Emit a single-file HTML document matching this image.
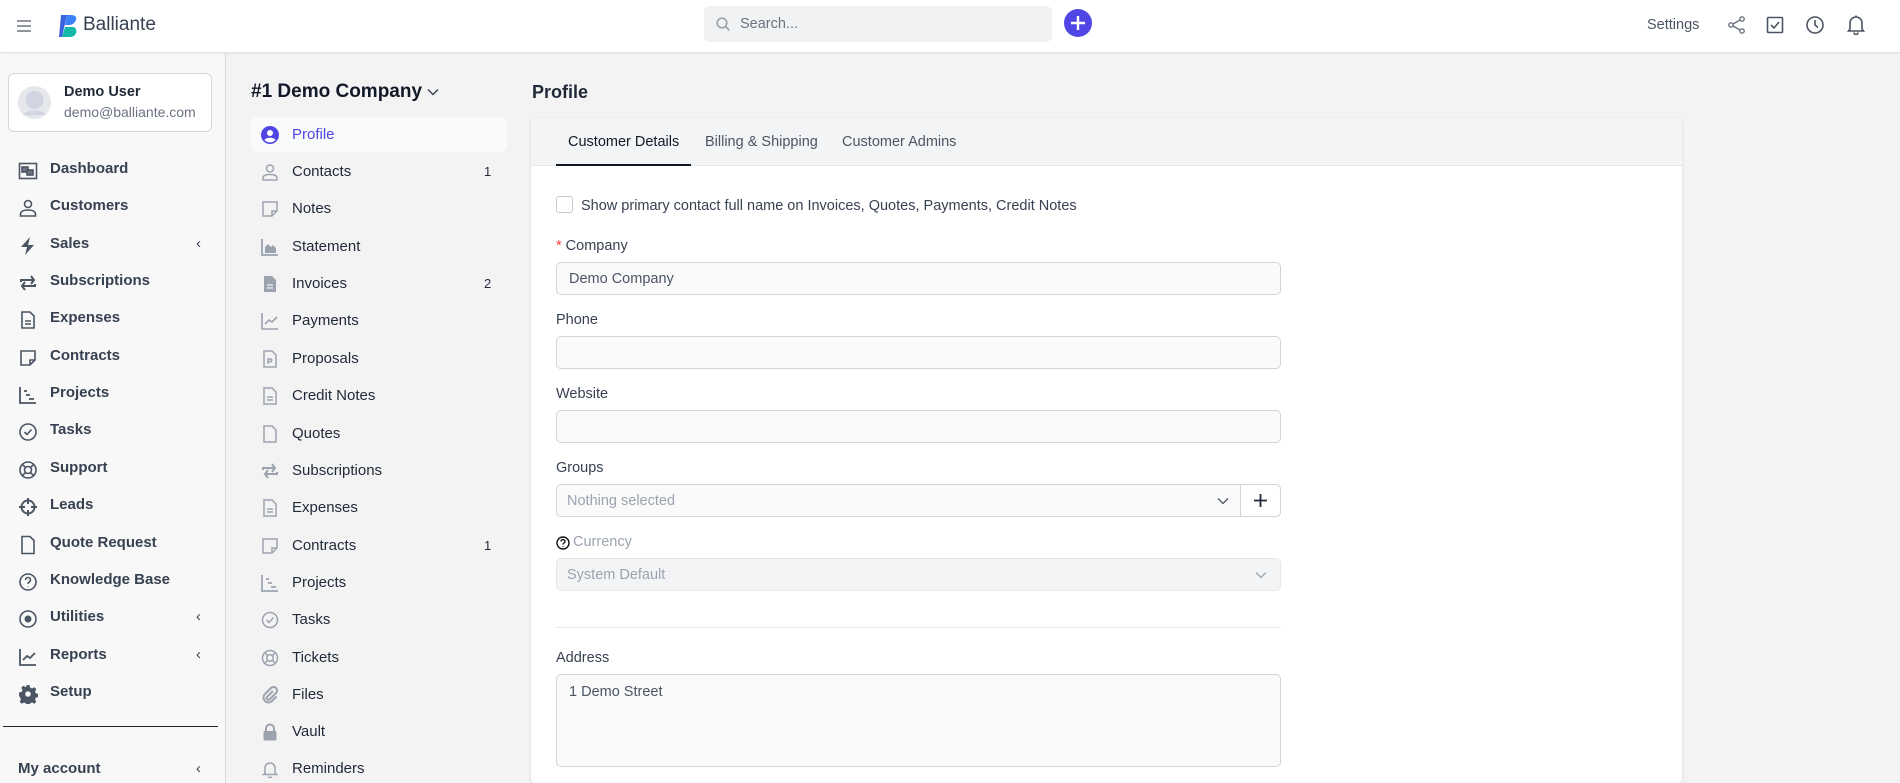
<!DOCTYPE html>
<html><head><meta charset="utf-8">
<style>
*{box-sizing:border-box;margin:0;padding:0}
html{width:1900px;height:783px;overflow:hidden}
body{width:1900px;height:783px;overflow:hidden;font-family:"Liberation Sans",sans-serif;background:#f3f3f4;color:#1f2937;position:relative}
.top{position:absolute;left:0;top:0;width:1900px;height:53px;background:#fff;border-bottom:1px solid #e2e2e2;box-shadow:0 1px 2px rgba(0,0,0,.05);z-index:2}
.abs{position:absolute}
.side{position:absolute;left:0;top:53px;width:226px;height:730px;background:#f8f8f8;border-right:1px solid #dcdcdc}
.card{position:absolute;left:8px;top:20px;width:204px;height:59px;border:1px solid #d6d6d6;border-radius:6px;background:#fff}
.mi{position:absolute;left:0;width:226px;height:30px;font-size:15px;font-weight:bold;color:#374151}
.mi svg{position:absolute;left:18px;top:5px}
.mi span{position:absolute;left:50px;top:4px}
.mi .ch{left:196px;font-weight:normal;color:#374151}
.col{position:absolute;left:226px;top:53px;width:290px;height:730px}
.si{position:absolute;left:25px;width:256px;height:35px;font-size:15px;color:#1f2937;border-radius:6px}
.si svg{position:absolute;left:10px;top:9px}
.si span{position:absolute;left:41px;top:9px}
.si .n{left:233px;font-size:13px;top:10px}
.panel{position:absolute;left:531px;top:118px;width:1151px;height:665px;background:#fff;border-radius:4px;box-shadow:0 1px 3px rgba(0,0,0,.12)}
.tabs{position:absolute;left:0;top:0;width:1151px;height:48px;background:#f3f4f6;border-bottom:1px solid #e5e7eb;border-radius:4px 4px 0 0}
.tab{position:absolute;top:16px;font-size:14.5px;color:#4b5563}
.lbl{position:absolute;left:25px;font-size:14.5px;color:#374151}
.inp{position:absolute;left:25px;width:725px;height:33px;border:1px solid #d1d5db;border-radius:5px;background:#fafafa;font-size:14.5px;color:#4b5563;padding:8px 12px}
</style></head><body>
<div class="top">
  <svg class="abs" style="left:16px;top:19px" width="16" height="14" viewBox="0 0 16 14"><path d="M1 2h14M1 7h14M1 12h14" stroke="#6b7280" stroke-width="1.6"/></svg>
  <svg class="abs" style="left:59px;top:14px" width="19" height="24" viewBox="0 0 19 24"><path d="M2 1h6L3 23H0z" fill="#3b63e0"/><path d="M8 1h4c4 0 6 2 5 5s-4 5-7 5L6 11z" fill="#3b82f6"/><path d="M6 13h7c4 0 5 3 4 6s-3 4-7 4H3z" fill="#14b8a6"/></svg>
  <div class="abs" style="left:83px;top:14px;font-size:19px;color:#374151">Balliante</div>
  <div class="abs" style="left:704px;top:6px;width:348px;height:36px;background:#f1f2f4;border-radius:6px">
    <svg class="abs" style="left:12px;top:11px" width="15" height="15" viewBox="0 0 15 15"><circle cx="6" cy="6" r="4.8" fill="none" stroke="#9ca3af" stroke-width="1.6"/><path d="M9.5 9.5l4 4" stroke="#9ca3af" stroke-width="1.6"/></svg>
    <div class="abs" style="left:36px;top:10px;font-size:14.5px;color:#6b7280">Search...</div>
  </div>
  <div class="abs" style="left:1064px;top:9px;width:28px;height:28px;border-radius:50%;background:#4f46e5"><svg width="28" height="28"><path d="M14 7v14M7 14h14" stroke="#fff" stroke-width="2.4"/></svg></div>
  <div class="abs" style="left:1647px;top:17px;font-size:14.5px;color:#4b5563">Settings</div>
  <svg class="abs" style="left:1727px;top:15px" width="20" height="20" viewBox="0 0 20 20" fill="none" stroke="#6b7280" stroke-width="1.4"><circle cx="15" cy="4" r="2.2"/><circle cx="4" cy="10" r="2.2"/><circle cx="15" cy="16" r="2.2"/><path d="M6 9l7-4M6 11l7 4"/></svg>
  <svg class="abs" style="left:1766px;top:16px" width="18" height="18" viewBox="0 0 18 18" fill="none" stroke="#4b5563" stroke-width="1.6"><rect x="1.5" y="1.5" width="15" height="15" rx="1"/><path d="M5 9l3 3 5-6"/></svg>
  <svg class="abs" style="left:1805px;top:15px" width="20" height="20" viewBox="0 0 20 20" fill="none" stroke="#4b5563" stroke-width="1.6"><circle cx="10" cy="10" r="8"/><path d="M10 5v5l3 2.5"/></svg>
  <svg class="abs" style="left:1846px;top:14px" width="20" height="21" viewBox="0 0 20 21" fill="none" stroke="#4b5563" stroke-width="1.6"><path d="M4 15V9a6 6 0 0112 0v6l1.5 2h-15zM8 18.5a2 2 0 004 0M10 1.5v1.5"/></svg>
</div>

<div class="side">
  <div class="card">
    <svg class="abs" style="left:9px;top:12px" width="33" height="33" viewBox="0 0 33 33"><circle cx="16.5" cy="16.5" r="16.5" fill="#e5e7eb"/><circle cx="16.5" cy="14" r="9" fill="#d1d5e2"/><path d="M5 29c3-6 20-6 23 0" fill="#d1d5e2"/></svg>
    <div class="abs" style="left:55px;top:10px;font-size:14.5px;font-weight:bold;color:#1f2937">Demo User</div>
    <div class="abs" style="left:55px;top:30px;font-size:14px;color:#6b7280">demo@balliante.com</div>
  </div>
  <div class="mi" style="top:103px"><svg width="20" height="20" viewBox="0 0 20 20" fill="none" stroke="#4b5563" stroke-width="1.6"><rect x="1.5" y="2.5" width="17" height="15"/><rect x="4" y="6" width="6" height="5" fill="#6b7280"/><rect x="9" y="9" width="6" height="5" fill="#6b7280"/></svg><span>Dashboard</span></div>
  <div class="mi" style="top:140px"><svg width="20" height="20" viewBox="0 0 20 20" fill="none" stroke="#4b5563" stroke-width="1.6"><circle cx="10" cy="6" r="3.5"/><path d="M2.5 18v-2c0-2 2-4 7.5-4s7.5 2 7.5 4v2z"/></svg><span>Customers</span></div>
  <div class="mi" style="top:178px"><svg width="20" height="20" viewBox="0 0 20 20"><path d="M12 1L3 11h6l-2 8 9-10h-6z" fill="#4b5563"/></svg><span>Sales</span><span class="ch">‹</span></div>
  <div class="mi" style="top:215px"><svg width="20" height="20" viewBox="0 0 20 20" fill="none" stroke="#4b5563" stroke-width="2"><path d="M3 9V7h13M13 3l3 4-3 4M17 11v2H4M7 17l-3-4 3-4"/></svg><span>Subscriptions</span></div>
  <div class="mi" style="top:252px"><svg width="20" height="20" viewBox="0 0 20 20" fill="none" stroke="#4b5563" stroke-width="1.6"><path d="M4 2h8l4 4v12H4zM7 11h6M7 14h6"/></svg><span>Expenses</span></div>
  <div class="mi" style="top:290px"><svg width="20" height="20" viewBox="0 0 20 20" fill="none" stroke="#4b5563" stroke-width="1.6"><path d="M3 3h14v9l-5 5H3zM17 12h-5v5"/></svg><span>Contracts</span></div>
  <div class="mi" style="top:327px"><svg width="20" height="20" viewBox="0 0 20 20" fill="none" stroke="#4b5563" stroke-width="1.8"><path d="M2 2v16h16M6 6h3M8 10h4M11 14h5"/></svg><span>Projects</span></div>
  <div class="mi" style="top:364px"><svg width="20" height="20" viewBox="0 0 20 20" fill="none" stroke="#4b5563" stroke-width="1.6"><circle cx="10" cy="10" r="8"/><path d="M6.5 10l2.5 2.5 4.5-5"/></svg><span>Tasks</span></div>
  <div class="mi" style="top:402px"><svg width="20" height="20" viewBox="0 0 20 20" fill="none" stroke="#4b5563" stroke-width="1.6"><circle cx="10" cy="10" r="8"/><circle cx="10" cy="10" r="3.5"/><path d="M4.5 4.5l3 3M15.5 4.5l-3 3M4.5 15.5l3-3M15.5 15.5l-3-3"/></svg><span>Support</span></div>
  <div class="mi" style="top:439px"><svg width="20" height="20" viewBox="0 0 20 20" fill="none" stroke="#4b5563" stroke-width="2"><circle cx="10" cy="10" r="6.5"/><path d="M10 1v6M10 13v6M1 10h6M13 10h6"/></svg><span>Leads</span></div>
  <div class="mi" style="top:477px"><svg width="20" height="20" viewBox="0 0 20 20" fill="none" stroke="#4b5563" stroke-width="1.6"><path d="M4 1.5h8l4 4v13H4z"/></svg><span>Quote Request</span></div>
  <div class="mi" style="top:514px"><svg width="20" height="20" viewBox="0 0 20 20" fill="none" stroke="#4b5563" stroke-width="1.6"><circle cx="10" cy="10" r="8"/><path d="M7.5 8a2.5 2.5 0 115 0c0 2-2.5 2-2.5 4M10 14.5v.5"/></svg><span>Knowledge Base</span></div>
  <div class="mi" style="top:551px"><svg width="20" height="20" viewBox="0 0 20 20"><circle cx="10" cy="10" r="8" fill="none" stroke="#4b5563" stroke-width="1.6"/><circle cx="10" cy="10" r="3.5" fill="#4b5563"/></svg><span>Utilities</span><span class="ch">‹</span></div>
  <div class="mi" style="top:589px"><svg width="20" height="20" viewBox="0 0 20 20" fill="none" stroke="#4b5563" stroke-width="1.8"><path d="M2 2v16h16M5 13l4-4 3 2 5-5"/></svg><span>Reports</span><span class="ch">‹</span></div>
  <div class="mi" style="top:626px"><svg width="20" height="20" viewBox="0 0 20 20"><path d="M8.5 1h3l.5 2.5 2 1 2.3-1.3 2 2-1.3 2.3 1 2 2.5.5v3l-2.5.5-1 2 1.3 2.3-2 2-2.3-1.3-2 1-.5 2.5h-3l-.5-2.5-2-1-2.3 1.3-2-2 1.3-2.3-1-2L1 11.5v-3l2.5-.5 1-2L3.2 3.7l2-2L7.5 3l1-.5z" fill="#4b5563"/><circle cx="10" cy="10" r="2.8" fill="#f8f8f8"/></svg><span>Setup</span></div>
  <div class="abs" style="left:3px;top:673px;width:215px;height:1px;background:#222"></div>
  <div class="mi" style="top:703px"><span style="left:18px">My account</span><span class="ch">‹</span></div>
</div>

<div class="col">
  <div class="abs" style="left:25px;top:28px;font-size:19px;font-weight:bold;color:#111827">#1 Demo Company</div>
  <svg class="abs" style="left:201px;top:35px" width="12" height="8" viewBox="0 0 12 8"><path d="M1 1.5l5 5 5-5" fill="none" stroke="#374151" stroke-width="1.4"/></svg>
  <div class="si" style="top:64px;background:#f9fafb"><svg width="18" height="18" viewBox="0 0 18 18"><circle cx="9" cy="9" r="9" fill="#4f46e5"/><circle cx="9" cy="7" r="3" fill="#fff"/><path d="M3.5 14c1.5-3 9.5-3 11 0a7.5 7.5 0 01-11 0z" fill="#fff"/></svg><span style="color:#4f46e5">Profile</span></div>
  <div class="si" style="top:101px"><svg width="18" height="18" viewBox="0 0 18 18" fill="none" stroke="#9ca3af" stroke-width="1.5"><circle cx="9" cy="5.5" r="3.5"/><path d="M2 17v-2c0-2 2-3.5 7-3.5s7 1.5 7 3.5v2z"/></svg><span>Contacts</span><span class="n">1</span></div>
  <div class="si" style="top:138px"><svg width="18" height="18" viewBox="0 0 18 18" fill="none" stroke="#9ca3af" stroke-width="1.5"><path d="M2 2h14v9l-5 5H2zM16 11h-5v5"/></svg><span>Notes</span></div>
  <div class="si" style="top:176px"><svg width="18" height="18" viewBox="0 0 18 18"><path d="M1 1v16h16" fill="none" stroke="#9ca3af" stroke-width="1.8"/><path d="M4 15V9l3-3 3 3 2-2 3 3v5z" fill="#9ca3af"/></svg><span>Statement</span></div>
  <div class="si" style="top:213px"><svg width="18" height="18" viewBox="0 0 18 18"><path d="M3 1h8l4 4v12H3z" fill="#9ca3af"/><path d="M6 10h6M6 13h6" stroke="#f3f3f4" stroke-width="1.2"/></svg><span>Invoices</span><span class="n">2</span></div>
  <div class="si" style="top:250px"><svg width="18" height="18" viewBox="0 0 18 18" fill="none" stroke="#9ca3af" stroke-width="1.6"><path d="M1 1v16h16M4 12l4-4 3 2 5-5"/></svg><span>Payments</span></div>
  <div class="si" style="top:288px"><svg width="18" height="18" viewBox="0 0 18 18" fill="none" stroke="#9ca3af" stroke-width="1.5"><path d="M3 1h8l4 4v12H3zM7 14V9h2.5a1.3 1.3 0 010 2.6H7"/></svg><span>Proposals</span></div>
  <div class="si" style="top:325px"><svg width="18" height="18" viewBox="0 0 18 18" fill="none" stroke="#9ca3af" stroke-width="1.5"><path d="M3 1h8l4 4v12H3zM6 10h6M6 13h6"/></svg><span>Credit Notes</span></div>
  <div class="si" style="top:363px"><svg width="18" height="18" viewBox="0 0 18 18" fill="none" stroke="#9ca3af" stroke-width="1.5"><path d="M3 1h8l4 4v12H3z"/></svg><span>Quotes</span></div>
  <div class="si" style="top:400px"><svg width="18" height="18" viewBox="0 0 18 18" fill="none" stroke="#9ca3af" stroke-width="2"><path d="M2 8V6h12M11 2l3 4-3 4M16 10v2H4M7 16l-3-4 3-4"/></svg><span>Subscriptions</span></div>
  <div class="si" style="top:437px"><svg width="18" height="18" viewBox="0 0 18 18" fill="none" stroke="#9ca3af" stroke-width="1.5"><path d="M3 1h8l4 4v12H3zM6 10h6M6 13h6"/></svg><span>Expenses</span></div>
  <div class="si" style="top:475px"><svg width="18" height="18" viewBox="0 0 18 18" fill="none" stroke="#9ca3af" stroke-width="1.5"><path d="M2 2h14v9l-5 5H2zM16 11h-5v5"/></svg><span>Contracts</span><span class="n">1</span></div>
  <div class="si" style="top:512px"><svg width="18" height="18" viewBox="0 0 18 18" fill="none" stroke="#9ca3af" stroke-width="1.7"><path d="M1 1v16h16M5 5h3M7 9h4M10 13h5"/></svg><span>Projects</span></div>
  <div class="si" style="top:549px"><svg width="18" height="18" viewBox="0 0 18 18" fill="none" stroke="#9ca3af" stroke-width="1.5"><circle cx="9" cy="9" r="7.5"/><path d="M5.5 9l2.5 2.5 4.5-5"/></svg><span>Tasks</span></div>
  <div class="si" style="top:587px"><svg width="18" height="18" viewBox="0 0 18 18" fill="none" stroke="#9ca3af" stroke-width="1.5"><circle cx="9" cy="9" r="7.5"/><circle cx="9" cy="9" r="3.3"/><path d="M4 4l2.7 2.7M14 4l-2.7 2.7M4 14l2.7-2.7M14 14l-2.7-2.7"/></svg><span>Tickets</span></div>
  <div class="si" style="top:624px"><svg width="18" height="18" viewBox="0 0 18 18" fill="none" stroke="#9ca3af" stroke-width="2"><path d="M12 5l-6 6a1.8 1.8 0 002.5 2.5l6.5-6.5a3.5 3.5 0 00-5-5L3.5 8.5a5 5 0 007 7l5-5"/></svg><span>Files</span></div>
  <div class="si" style="top:661px"><svg width="18" height="18" viewBox="0 0 18 18"><path d="M5 8V5.5a4 4 0 018 0V8" fill="none" stroke="#9ca3af" stroke-width="2"/><rect x="2.5" y="8" width="13" height="9.5" rx="1.5" fill="#9ca3af"/></svg><span>Vault</span></div>
  <div class="si" style="top:698px"><svg width="18" height="18" viewBox="0 0 18 18" fill="none" stroke="#9ca3af" stroke-width="1.5"><path d="M4 13V8a5 5 0 0110 0v5l1.5 1.5h-13zM7.5 16.5a1.5 1.5 0 003 0"/></svg><span>Reminders</span></div>
</div>

<div class="abs" style="left:532px;top:82px;font-size:18px;font-weight:bold;color:#1f2937">Profile</div>
<div class="panel">
  <div class="tabs">
    <div class="tab" style="left:37px;color:#111827">Customer Details</div>
    <div class="tab" style="left:174px">Billing &amp; Shipping</div>
    <div class="tab" style="left:311px">Customer Admins</div>
    <div class="abs" style="left:25px;top:46px;width:135px;height:2px;background:#111827"></div>
  </div>
  <div class="abs" style="left:25px;top:78px;width:17px;height:17px;border:1px solid #c7cbd1;border-radius:3px;background:#fff"></div>
  <div class="abs" style="left:50px;top:80px;font-size:14.5px;color:#374151">Show primary contact full name on Invoices, Quotes, Payments, Credit Notes</div>
  <div class="lbl" style="top:120px"><span style="color:#ef4444">* </span>Company</div>
  <div class="inp" style="top:144px">Demo Company</div>
  <div class="lbl" style="top:194px">Phone</div>
  <div class="inp" style="top:218px"></div>
  <div class="lbl" style="top:268px">Website</div>
  <div class="inp" style="top:292px"></div>
  <div class="lbl" style="top:342px">Groups</div>
  <div class="inp" style="top:366px;color:#9ca3af;padding-left:10px">Nothing selected
    <svg class="abs" style="left:660px;top:12px" width="12" height="8" viewBox="0 0 12 8"><path d="M1 1.5l5 5 5-5" fill="none" stroke="#4b5563" stroke-width="1.3"/></svg>
    <div class="abs" style="left:683px;top:-1px;width:41px;height:33px;border:1px solid #d1d5db;background:#fff;border-radius:0 5px 5px 0"><svg width="39" height="31"><path d="M19.5 9v13M13 15.5h13" stroke="#1f2937" stroke-width="1.8"/></svg></div>
  </div>
  <svg class="abs" style="left:25px;top:418px" width="14" height="14" viewBox="0 0 14 14" fill="none" stroke="#111" stroke-width="1.4"><circle cx="7" cy="7" r="6"/><path d="M5 5.5a2 2 0 114 0c0 1.5-2 1.5-2 3M7 10v.8"/></svg>
  <div class="lbl" style="top:416px;left:42px;color:#9ca3af">Currency</div>
  <div class="inp" style="top:440px;background:#f3f4f6;border-color:#e5e7eb;color:#9ca3af;padding-left:10px">System Default
    <svg class="abs" style="left:698px;top:12px" width="12" height="8" viewBox="0 0 12 8"><path d="M1 1.5l5 5 5-5" fill="none" stroke="#9ca3af" stroke-width="1.3"/></svg>
  </div>
  <div class="abs" style="left:25px;top:509px;width:725px;height:1px;background:#e5e7eb"></div>
  <div class="lbl" style="top:532px">Address</div>
  <div class="inp" style="top:556px;height:93px;padding:9px 12px">1 Demo Street</div>
</div>
</body></html>
